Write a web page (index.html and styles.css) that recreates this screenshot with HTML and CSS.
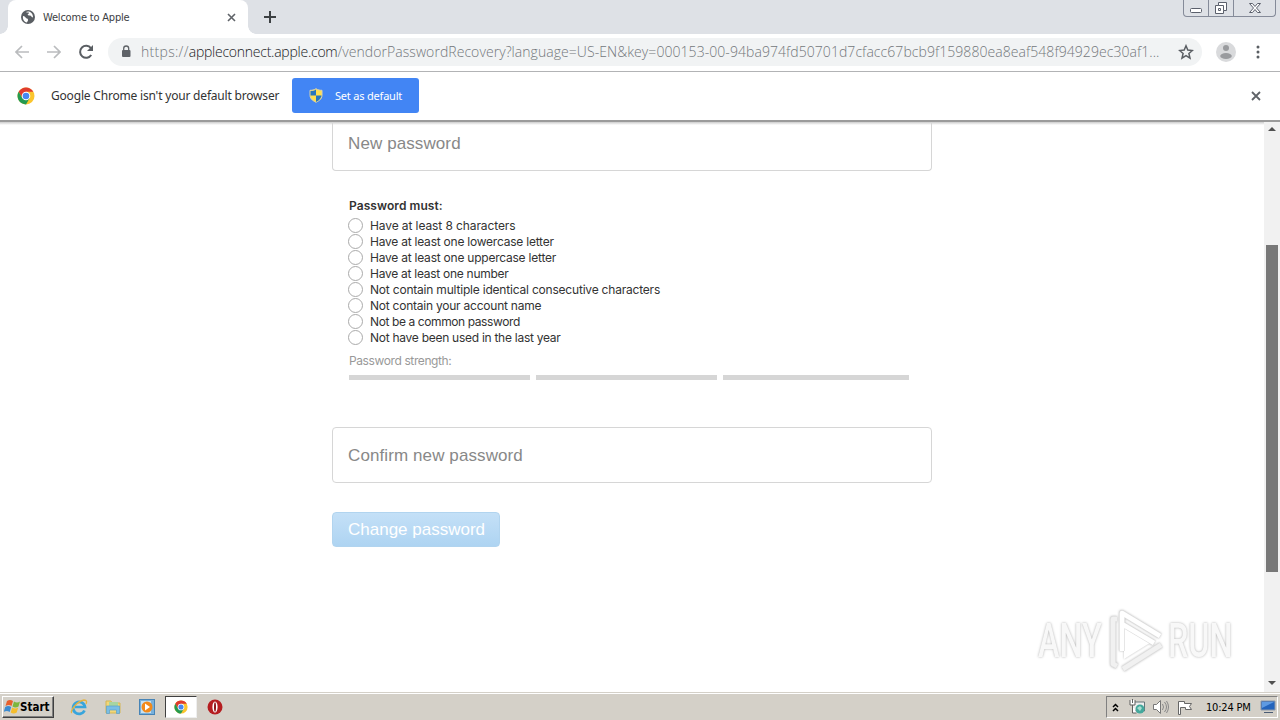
FILE: index.html
```html
<!DOCTYPE html>
<html lang="en">
<head>
  <meta charset="UTF-8">
  <title>Welcome to Apple</title>
  <link rel="stylesheet" href="styles.css">
</head>
<body>
  <!-- Tab strip -->
  <div class="tabs">
    <div class="edge"></div>
    <div class="tab">
      <svg class="globe" width="14" height="14" viewBox="0 0 14 14"><circle cx="7" cy="7" r="7" fill="#5a5e63"/><path d="M2 6c2 0 2 1 3 2s2 0 2 2-1 1-1 2.500C3 12 1.500 9 2 6zM5 2c1 1 3 0 3 1S6 4 7 5s2 0 3 1 1 2 2 1c0-3-2-5.500-5-5.500z" fill="#fff"/></svg>
      <span class="tab-title">Welcome to Apple</span>
      <svg class="tab-close" width="9" height="9" viewBox="0 0 9 9"><path d="M1 1l7 7M8 1L1 8" stroke="#5f6368" stroke-width="1.600"/></svg>
    </div>
    <div class="edge-right"></div>
    <svg class="new-tab" width="12" height="12" viewBox="0 0 12 12"><path d="M6 0v12M0 6h12" stroke="#3c4043" stroke-width="2"/></svg>
    <div class="window-buttons">
      <div><svg width="24" height="16" viewBox="0 0 24 16"><rect x="6.500" y="8.500" width="11" height="4" rx="1" fill="#fff" stroke="#5b606c"/></svg></div>
      <div><svg width="24" height="16" viewBox="0 0 24 16"><path d="M9.500 2.500h8v8h-3v3h-8v-8h3z" fill="#fff" stroke="#5b606c"/><path d="M9.500 5.500h5v5M9.500 8.500h2v2h-2z" fill="none" stroke="#5b606c"/></svg></div>
      <div class="wide"><svg width="40" height="16" viewBox="0 0 40 16"><path d="M15.500 3.500h3l2.500 3 2.500-3h3l-4 4.500 4 4.500h-3l-2.500-3-2.500 3h-3l4-4.500z" fill="#fff" stroke="#5b606c"/></svg></div>
    </div>
  </div>

  <!-- Toolbar -->
  <div class="toolbar">
    <svg width="14" height="14" viewBox="0 0 14 14"><path d="M14 7H1M7 1L1 7l6 6" fill="none" stroke="#babcbe" stroke-width="1.700"/></svg>
    <svg width="14" height="14" viewBox="0 0 14 14"><path d="M0 7h13M7 1l6 6-6 6" fill="none" stroke="#babcbe" stroke-width="1.700"/></svg>
    <svg class="reload" width="16" height="16" viewBox="0 0 16 16"><path d="M13.200 11A6 6 0 1 1 12.900 4.200" fill="none" stroke="#5a5e63" stroke-width="2"/><path d="M15 1v6H9z" fill="#5a5e63"/></svg>
    <div class="omnibox">
      <svg width="10" height="13" viewBox="0 0 10 13"><rect x="1" y="5" width="8.500" height="7" rx="1" fill="#5f6368"/><path d="M2.700 5V3.500a2.500 2.500 0 0 1 5 0V5" fill="none" stroke="#5f6368" stroke-width="1.300"/></svg>
      <span class="url"><span class="scheme">https://</span><span class="host">appleconnect.apple.com</span><span class="path">/vendorPasswordRecovery?language=US-EN&amp;key=000153-00-94ba974fd50701d7cfacc67bcb9f159880ea8eaf548f94929ec30af1...</span></span>
      <svg class="star" width="16" height="16" viewBox="0 0 16 16"><path d="M8 1.800l1.800 4.300 4.600.4-3.500 3 1.100 4.600L8 11.700l-4 2.400 1.100-4.600-3.500-3 4.600-.4z" fill="none" stroke="#5a5e63" stroke-width="1.500"/></svg>
    </div>
    <svg class="avatar" width="20" height="20" viewBox="0 0 20 20"><circle cx="10" cy="10" r="10" fill="#d9dadc"/><circle cx="10" cy="6" r="3" fill="#999b9e"/><ellipse cx="10" cy="14" rx="5.800" ry="3" fill="#999b9e"/></svg>
    <svg class="dots" width="4" height="14" viewBox="0 0 4 14"><circle cx="2" cy="2" r="1.500" fill="#5a5e63"/><circle cx="2" cy="7" r="1.500" fill="#5a5e63"/><circle cx="2" cy="12" r="1.500" fill="#5a5e63"/></svg>
  </div>

  <!-- Default browser bar -->
  <div class="infobar">
    <svg width="18" height="18" viewBox="0 0 18 18"><circle cx="9" cy="9" r="8.500" fill="#fbc52d"/><path d="M1.640 4.750A8.500 8.500 0 0 1 16.360 4.750H9L5.320 11.100z" fill="#df3b2f"/><path d="M1.640 4.750A8.500 8.500 0 0 0 9 17.500l3.700-6.400H5.300z" fill="#249a50"/><circle cx="9" cy="9" r="4.300" fill="#fff"/><circle cx="9" cy="9" r="3.300" fill="#4687f1"/></svg>
    <span class="infobar-text">Google Chrome isn't your default browser</span>
    <div class="default-button">
      <svg width="14" height="15" viewBox="0 0 14 15"><path d="M7 .7c2 1.300 4 1.600 6 1.600v5c0 4-4 6-6 7-2-1-6-3-6-7v-5c2 0 4-.3 6-1.600z" fill="#ffdf4f" stroke="#d9d3ae"/><path d="M7 1.500v6H1.500V3C4 3 5.500 2.500 7 1.500zM7 7.500h5.500C12 11 9 13 7 14z" fill="#2876bd"/></svg>
      <span>Set as default</span>
    </div>
    <svg class="infobar-close" width="10" height="10" viewBox="0 0 10 10"><path d="M1 1l8 8M9 1L1 9" stroke="#5f6368" stroke-width="1.800"/></svg>
  </div>

  <!-- Page -->
  <div class="viewport">
    <div class="page">
      <div class="form">
        <div class="field first"><span>New password</span></div>
        <div class="rules">
          <div class="rules-title">Password must:</div>
          <div class="rule"><i></i><span class="loose">Have at least 8 characters</span></div>
          <div class="rule"><i></i><span>Have at least one lowercase letter</span></div>
          <div class="rule"><i></i><span>Have at least one uppercase letter</span></div>
          <div class="rule"><i></i><span class="snug">Have at least one number</span></div>
          <div class="rule"><i></i><span class="long">Not contain multiple identical consecutive characters</span></div>
          <div class="rule"><i></i><span>Not contain your account name</span></div>
          <div class="rule"><i></i><span class="tight">Not be a common password</span></div>
          <div class="rule"><i></i><span class="snug">Not have been used in the last year</span></div>
          <div class="strength">Password strength:</div>
          <div class="bars"><b></b><b></b><b></b></div>
        </div>
        <div class="field"><span>Confirm new password</span></div>
        <div class="submit"><span>Change password</span></div>
      </div>
    </div>
    <div class="scrollbar">
      <svg width="8" height="4" viewBox="0 0 8 4"><path d="M0 4l4-4 4 4z" fill="#505050"/></svg>
      <div class="thumb"></div>
      <svg width="8" height="4" viewBox="0 0 8 4"><path d="M0 0l4 4 4-4z" fill="#505050"/></svg>
    </div>
    <div class="watermark">
      <span class="any">ANY</span>
      <svg width="58" height="64" viewBox="0 0 58 64"><path d="M16 14l29 18-29 18z" fill="#fff"/><path d="M9 10H5v45l4 2M14 42V4l38 23M15 60l38-24M14 15l32 19" fill="none" stroke="#dedede" stroke-width="6" stroke-linejoin="round"/><path d="M9 10H5v45l4 2M15 60l38-24" fill="none" stroke="#f1f1f1" stroke-width="4.500" stroke-linejoin="round"/><path d="M14 42V4l38 23M14 15l32 19" fill="none" stroke="#fff" stroke-width="4.500" stroke-linejoin="round"/></svg>
      <span class="run">RUN</span>
    </div>
  </div>

  <!-- Taskbar -->
  <div class="taskbar">
    <div class="start">
      <svg width="17" height="16" viewBox="0 0 17 16"><path d="M3 2q3-2 6 0L7.500 7Q5 5 1.500 7z" fill="#e8602c"/><path d="M10 2.500q3 2 6 0L14.500 7.500q-3 2-6 0z" fill="#7cb63e"/><path d="M1.200 8q3-2 6 0L5.700 13q-3-2-6 0z" fill="#3c8bd0"/><path d="M8.200 8.500q3 2 6 0L12.700 13.500q-3 2-6 0z" fill="#f5bd2d"/></svg>
      <span>Start</span>
    </div>
    <div class="launch">
      <svg width="18" height="18" viewBox="0 0 18 18"><path d="M14.500 12.500A6 6 0 1 1 15 9H5" fill="none" stroke="#38a5dc" stroke-width="2.700"/><path d="M2 15C-1 14 7 3 14 2c3 0 3 2 2 4" fill="none" stroke="#e5b340" stroke-width="1.300"/></svg>
    </div>
    <div class="launch">
      <svg width="16" height="16" viewBox="0 0 16 16"><path d="M1 2h5l1 2h8v10H1z" fill="#f3d778" stroke="#d3b654"/><path d="M4 3h9v4H4z" fill="#a8d5a0"/><path d="M1.500 7h13v7.500h-3V11h-7v3.500h-3z" fill="#79bee6" stroke="#5da1c9" stroke-width=".7"/></svg>
    </div>
    <div class="launch">
      <svg width="16" height="16" viewBox="0 0 16 16"><rect x=".5" y=".5" width="15" height="15" fill="#78b1dc" stroke="#4784b6"/><rect x="2" y="2" width="10" height="12" fill="#c7e1f2"/><circle cx="8" cy="8" r="5.500" fill="#f28a1b"/><path d="M6 4.500l5 3.500-5 3.500z" fill="#fff"/></svg>
    </div>
    <div class="launch active">
      <svg width="14" height="14" viewBox="0 0 18 18"><circle cx="9" cy="9" r="8.500" fill="#fbc52d"/><path d="M1.640 4.750A8.500 8.500 0 0 1 16.360 4.750H9L5.320 11.100z" fill="#df3b2f"/><path d="M1.640 4.750A8.500 8.500 0 0 0 9 17.500l3.700-6.400H5.300z" fill="#249a50"/><circle cx="9" cy="9" r="4.300" fill="#fff"/><circle cx="9" cy="9" r="3.300" fill="#4687f1"/></svg>
    </div>
    <div class="launch">
      <svg width="16" height="16" viewBox="0 0 16 16"><circle cx="8" cy="8" r="7.500" fill="#b51d20"/><ellipse cx="8" cy="8" rx="2.600" ry="5.500" fill="#fff"/><ellipse cx="8" cy="8" rx="1" ry="4.800" fill="#8d1518"/></svg>
    </div>
    <div class="tray">
      <svg width="7" height="9" viewBox="0 0 7 9"><path d="M1 4l2.500-2.500L6 4M1 8l2.500-2.500L6 8" fill="none" stroke="#000" stroke-width="1.500"/></svg>
      <svg class="net" width="16" height="16" viewBox="0 0 16 16"><path d="M6 3h9.500v9H4V8" fill="#eee" stroke="#66757b"/><path d="M1 1v5h5V1M3.500 0v4M3.500 6v8h4" fill="#fff" stroke="#606060"/><circle cx="11" cy="10" r="4.500" fill="#44a89c"/><path d="M8 9l3-2 2 2-2 3z" fill="#a8dcd0"/></svg>
      <svg class="sound" width="16" height="16" viewBox="0 0 16 16"><path d="M.5 5.500h3l4-4v13l-4-4h-3z" fill="#fff" stroke="#777"/><path d="M9.500 5q2 3 0 6M11.500 3q4 5 0 10M13.500 2q4 6 0 12" fill="none" stroke="#888"/></svg>
      <svg class="flag" width="16" height="15" viewBox="0 0 16 15"><path d="M1.500 14.500v-13h6v2h7l-2 3 2 3h-6v-2h-5v7z" fill="#fff" stroke="#666"/></svg>
      <span class="clock">10:24 PM</span>
      <svg width="16" height="14" viewBox="0 0 16 14"><path d="M1 1h14v9H1z" fill="#2464bc" stroke="#8c98a9"/><path d="M2 2h12L2 8z" fill="#5e9ae2"/><path d="M4 12.500h9" stroke="#4a5b74"/></svg>
    </div>
  </div>
</body>
</html>
```
FILE: styles.css
```css
* {
  box-sizing: border-box;
}

body {
  margin: 0;
  width: 1280px;
  height: 720px;
  display: flex;
  flex-direction: column;
  overflow: hidden;
  background: #fff;
  font-family: "Noto Sans", sans-serif;
  white-space: nowrap;
}

svg {
  display: block;
  flex: none;
}

.tabs {
  height: 34px;
  display: flex;
  background: #dee1e6;
}

.edge,
.edge-right {
  width: 8px;
  background: radial-gradient(circle at 0 26px, #dee1e6 7.5px, #fff 8px) 0 26px / 8px 8px no-repeat;
  background: radial-gradient(circle at 0 0, #dee1e6 7.5px, #fff 8px) 0 26px / 8px 8px no-repeat;
}

.edge-right {
  background: radial-gradient(circle at 8px 0, #dee1e6 7.5px, #fff 8px) 0 26px / 8px 8px no-repeat;
}

.tab {
  width: 240px;
  display: flex;
  align-items: center;
  padding: 0 12px 0 13px;
  background: #fff;
  border-radius: 8px 8px 0 0;
}

.tab-title {
  margin-left: 8px;
  font-family: "DejaVu Sans Condensed", "DejaVu Sans", sans-serif;
  font-size: 11px;
  letter-spacing: -0.2px;
  color: #3c4043;
}

.tab-close {
  margin-left: auto;
}

.new-tab {
  margin: 11px 0 0 8px;
}

.window-buttons {
  display: flex;
  height: 17px;
  margin: 0 4px 0 auto;
  border: 1px solid #858b99;
  border-top: 0;
  border-radius: 0 0 4px 4px;
}

.window-buttons div {
  width: 25px;
  border-right: 1px solid #858b99;
}

.window-buttons .wide {
  width: 41px;
  border-right: 0;
}

.toolbar {
  height: 38px;
  display: flex;
  align-items: center;
  padding: 0 20px 2px 15px;
  border-bottom: 1px solid #b2b3b5;
}

.toolbar > svg + svg {
  margin-left: 18px;
}

.toolbar .reload {
  margin-left: 17px;
}

.omnibox {
  width: 1095px;
  height: 28px;
  display: flex;
  align-items: center;
  margin-left: 14px;
  padding: 0 8px 0 13px;
  background: #f1f3f4;
  border-radius: 14px;
}

.url {
  margin-left: 10px;
  font-family: "Open Sans", sans-serif;
  font-size: 14px;
  font-weight: 300;
  color: #73777b;
}

.scheme {
  letter-spacing: 0.3px;
}

.host {
  color: #202124;
  letter-spacing: -0.25px;
}

.path {
  letter-spacing: 0.06px;
}

.star {
  margin-left: auto;
}

.avatar {
  margin-left: 14px;
}

.toolbar .dots {
  margin-left: 20px;
}

.infobar {
  height: 50px;
  display: flex;
  align-items: center;
  padding: 0 19px 1px 17px;
  border-bottom: 2px solid #9b9b9b;
}

.infobar-text {
  width: 228px;
  margin-left: 16px;
  font-size: 12px;
  letter-spacing: -0.19px;
  color: #333;
}

.default-button {
  width: 127px;
  height: 35px;
  display: flex;
  align-items: center;
  margin-left: 13px;
  padding-left: 17px;
  background: #4285f4;
  border-radius: 3px;
  color: #fff;
  font-size: 11px;
  letter-spacing: -0.2px;
}

.default-button span {
  margin-left: 12px;
}

.infobar-close {
  margin-left: auto;
}

.viewport {
  position: relative;
  height: 570px;
  display: flex;
  background: linear-gradient(#ccc, #fff 3px);
}

.page {
  flex: 1;
  overflow: hidden;
  padding-left: 332px;
}

.form {
  width: 600px;
}

.field {
  height: 56px;
  display: flex;
  align-items: center;
  padding: 2px 0 0 15px;
  border: 1px solid #d6d6d6;
  border-radius: 4px;
  font-family: "Liberation Sans", sans-serif;
  font-size: 17px;
  letter-spacing: 0.1px;
  color: #888;
}

.first {
  height: 49px;
  padding: 0 0 4px 15px;
  border-top: 0;
  border-radius: 0 0 4px 4px;
}

.rules {
  height: 256px;
  padding: 26px 0 0 17px;
  font-family: Inter, sans-serif;
  font-size: 12px;
  color: #333;
}

.rules-title {
  height: 20px;
  line-height: 17px;
  font-weight: 600;
  letter-spacing: 0.07px;
}

.rule {
  height: 16px;
  display: flex;
  align-items: center;
  letter-spacing: -0.23px;
}

.rule .loose {
  letter-spacing: -0.1px;
}

.rule .long {
  letter-spacing: -0.2px;
}

.rule .snug {
  letter-spacing: -0.27px;
}

.rule .tight {
  letter-spacing: -0.4px;
}

.rule i {
  width: 15px;
  height: 15px;
  margin: 0 7px 0 -1px;
  border: 1px solid #aaa;
  border-radius: 50%;
}

.strength {
  margin-top: 7px;
  line-height: 17px;
  letter-spacing: -0.39px;
  color: #999;
}

.bars {
  display: flex;
  gap: 6px;
  margin-top: 6px;
}

.bars b {
  width: 181px;
  height: 5px;
  background: #d6d6d6;
}

.bars b:last-child {
  width: 186px;
}

.submit {
  width: 168px;
  height: 35px;
  display: flex;
  align-items: center;
  margin-top: 29px;
  padding-left: 15px;
  border: 1px solid #b1d4ef;
  border-radius: 4px;
  background: linear-gradient(#c4e0f7, #aed4f2);
  font-family: "Liberation Sans", sans-serif;
  font-size: 17px;
  color: #fff;
}

.scrollbar {
  width: 16px;
  display: flex;
  flex-direction: column;
  align-items: center;
  padding: 5px 0 7px;
  background: #f1f1f1;
}

.thumb {
  width: 12px;
  height: 327px;
  margin: 114px 0 109px;
  background: #787878;
}

/* overlay logo in the page corner */
.watermark {
  position: absolute;
  left: 1038px;
  top: 487px;
  width: 197px;
  height: 64px;
  display: flex;
  align-items: center;
  color: #f8f8f8;
  font-family: Roboto, sans-serif;
  font-size: 49px;
  font-weight: 500;
  line-height: 64px;
  text-shadow: 0 0 3px #aaa;
}

.watermark span {
  width: 66px;
  transform: scaleX(.66);
  transform-origin: left;
}

.watermark svg {
  margin-left: 4px;
  filter: drop-shadow(0 0 1px #bbb);
}

.watermark .run {
  margin-left: 2px;
}

.taskbar {
  height: 28px;
  display: flex;
  align-items: center;
  padding: 1px 2px 0;
  background: #d4d0c8;
  border-top: 1px solid #d4d0c8;
  box-shadow: inset 0 1px #fff;
}

.start {
  width: 52px;
  height: 22px;
  display: flex;
  align-items: center;
  margin-right: 8px;
  padding-left: 1px;
  border: 1px solid;
  border-color: #fff #404040 #404040 #fff;
  box-shadow: inset -1px -1px #808080;
  font-family: "DejaVu Sans Condensed", "DejaVu Sans", sans-serif;
  font-size: 11.5px;
  font-weight: bold;
}

.start span {
  margin-left: -1px;
}

.launch {
  width: 34px;
  height: 22px;
  display: flex;
  align-items: center;
  justify-content: center;
}

.active {
  width: 32px;
  margin: 0 1px;
  background: #fff;
  border: 1px solid;
  border-color: #404040 #eee #eee #404040;
}

.tray {
  height: 22px;
  width: 172px;
  display: flex;
  align-items: center;
  margin-left: auto;
  padding-left: 5px;
  border: 1px solid;
  border-color: #808080 #fff #fff #808080;
}

.net {
  margin-left: 10px;
}

.sound,
.flag {
  margin-left: 8px;
}

.clock {
  width: 53px;
  margin-left: 13px;
  margin-right: 1px;
  font-family: "DejaVu Sans Condensed", "DejaVu Sans", sans-serif;
  font-size: 11px;
  letter-spacing: -0.2px;
}
```
